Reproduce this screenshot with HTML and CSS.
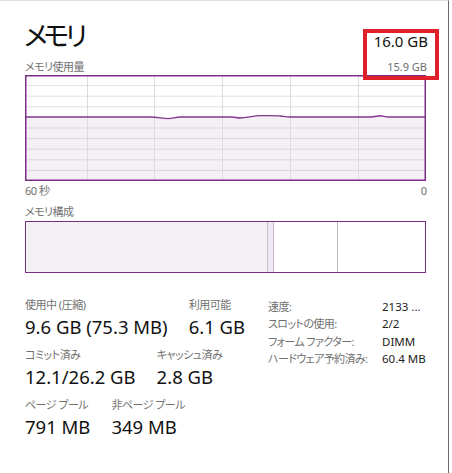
FILE: index.html
```html
<!DOCTYPE html>
<html lang="ja">
<head>
<meta charset="utf-8">
<link rel="stylesheet" href="styles.css">
</head>
<body>
<div class="panel">
  <div class="head">
    <h1 class="title">メモリ</h1>
    <div class="total">16.0 GB</div>
  </div>
  <div class="sub">
    <span class="lbl">メモリ使用量</span>
    <span class="lbl num">15.9 GB</span>
  </div>
  <div class="chart">
    <svg width="401" height="106" viewBox="0 0 401 106">
      <g stroke="#e2e2e2" stroke-width="1">
        <line x1="0" y1="10.6" x2="401" y2="10.6"/>
        <line x1="0" y1="21.2" x2="401" y2="21.2"/>
        <line x1="0" y1="31.8" x2="401" y2="31.8"/>
      </g>
      <path d="M1 42 L125 42 C132 42 138 43.6 143 43.6 C148 43.6 150 42 156 42 L207 42 C210 42 212 43 215 43 C222 43 228 40.6 236 40.6 C244 40.6 250 40.4 256 41 C259 41.4 261 42 265 42 L345 42 C350 42 352 40.8 355 40.8 C358 40.8 360 42 364 42 L400 42 L400 105 L1 105 Z" fill="#f5f0f6"/>
      <g stroke="#dcd6dd" stroke-width="1">
        <line x1="0" y1="53" x2="401" y2="53"/>
        <line x1="0" y1="63.6" x2="401" y2="63.6"/>
        <line x1="0" y1="74.2" x2="401" y2="74.2"/>
        <line x1="0" y1="84.8" x2="401" y2="84.8"/>
        <line x1="0" y1="95.4" x2="401" y2="95.4"/>
      </g>
      <g stroke="#dedbdf" stroke-width="1">
        <line x1="62.5" y1="0" x2="62.5" y2="106"/>
        <line x1="129.5" y1="0" x2="129.5" y2="106"/>
        <line x1="197.5" y1="0" x2="197.5" y2="106"/>
        <line x1="265.5" y1="0" x2="265.5" y2="106"/>
        <line x1="333.5" y1="0" x2="333.5" y2="106"/>
      </g>
      <path d="M1 42 L125 42 C132 42 138 43.6 143 43.6 C148 43.6 150 42 156 42 L207 42 C210 42 212 43 215 43 C222 43 228 40.6 236 40.6 C244 40.6 250 40.4 256 41 C259 41.4 261 42 265 42 L345 42 C350 42 352 40.8 355 40.8 C358 40.8 360 42 364 42 L400 42" fill="none" stroke="#84368f" stroke-width="1.4"/>
      <rect x="0.75" y="0.75" width="399.5" height="104.5" fill="none" stroke="#7a2e86" stroke-width="1.5"/>
    </svg>
  </div>
  <div class="axis">
    <span class="lbl">60 秒</span>
    <span class="lbl num">0</span>
  </div>
  <div class="lbl sec">メモリ構成</div>
  <div class="comp">
    <div class="seg inuse"></div>
    <div class="seg mod"></div>
    <div class="seg standby"></div>
    <div class="seg free"></div>
  </div>
  <div class="stats">
    <div class="left">
      <div class="row">
        <div class="stat"><div class="lbl">使用中 (圧縮)</div><div class="val">9.6 GB (75.3 MB)</div></div>
        <div class="stat"><div class="lbl">利用可能</div><div class="val">6.1 GB</div></div>
      </div>
      <div class="row">
        <div class="stat"><div class="lbl">コミット済み</div><div class="val">12.1/26.2 GB</div></div>
        <div class="stat"><div class="lbl">キャッシュ済み</div><div class="val">2.8 GB</div></div>
      </div>
      <div class="row">
        <div class="stat"><div class="lbl">ページ プール</div><div class="val">791 MB</div></div>
        <div class="stat"><div class="lbl">非ページ プール</div><div class="val">349 MB</div></div>
      </div>
    </div>
    <div class="right">
      <div class="k">速度:</div><div class="v">2133 ...</div>
      <div class="k">スロットの使用:</div><div class="v">2/2</div>
      <div class="k">フォーム ファクター:</div><div class="v">DIMM</div>
      <div class="k">ハードウェア予約済み:</div><div class="v">60.4 MB</div>
    </div>
  </div>
  <div class="mark"></div>
</div>
</body>
</html>
```

FILE: styles.css
```css
* { box-sizing: border-box; }
html, body { margin: 0; padding: 0; background: #fff; }
body {
  font-family: "Noto Sans", "Noto Sans CJK JP", sans-serif;
  font-feature-settings: "palt";
  color: #111;
}
.panel {
  position: relative;
  width: 449px;
  height: 473px;
  border-top: 1px solid #dedede;
  border-right: 1px solid #6a6a6a;
  padding: 0 22px 0 25px;
}
.head {
  display: flex;
  justify-content: space-between;
  align-items: flex-end;
  height: 52px;
}
.title {
  margin: 0;
  font-size: 27px;
  font-weight: normal;
  line-height: 30px;
  letter-spacing: -4px;
  margin-left: -1px;
  padding-bottom: 2px;
}
.total {
  font-size: 15px;
  line-height: 18px;
  padding-bottom: 3px;
  margin-right: -2px;
}
.lbl {
  font-size: 11px;
  line-height: 14px;
  color: #707070;
  letter-spacing: -0.5px;
}
.lbl.num { letter-spacing: 0; }
.sub {
  display: flex;
  justify-content: space-between;
  height: 22px;
  padding-top: 7px;
  margin-right: -1px;
}
.chart { height: 106px; }
.chart svg { display: block; }
.axis {
  display: flex;
  justify-content: space-between;
  height: 22px;
  padding-top: 3px;
  margin-right: -1px;
}
.sec { display: block; height: 18px; padding-top: 2px; }
.comp {
  display: flex;
  height: 52px;
  border: 1.5px solid #7a2e86;
}
.seg { height: 100%; }
.inuse { width: 241px; background: #f3f0f4; }
.mod { width: 7px; background: #efe7f1; border-left: 1px solid #c8bccc; border-right: 1px solid #c8bccc; }
.standby { width: 64px; border-right: 1px solid #bdb2c1; }
.free { flex: 1; }
.stats {
  display: grid;
  grid-template-columns: 243px 1fr;
  padding-top: 25px;
}
.left { display: flex; flex-direction: column; }
.row { display: flex; gap: 21px; height: 50px; }
.stat .lbl { display: block; }
.val {
  font-size: 18.5px;
  line-height: 26px;
  color: #111;
  margin-top: 2px;
}
.right {
  display: grid;
  grid-template-columns: 114px auto;
  grid-auto-rows: 17.3px;
  align-content: start;
}
.k { font-size: 11px; line-height: 17px; color: #707070; letter-spacing: -0.6px; white-space: nowrap; }
.v { font-size: 11.5px; line-height: 17px; color: #222; }
.mark {
  position: absolute;
  left: 363px;
  top: 28px;
  width: 76px;
  height: 51px;
  border: 4px solid #e0202a;
}
```
